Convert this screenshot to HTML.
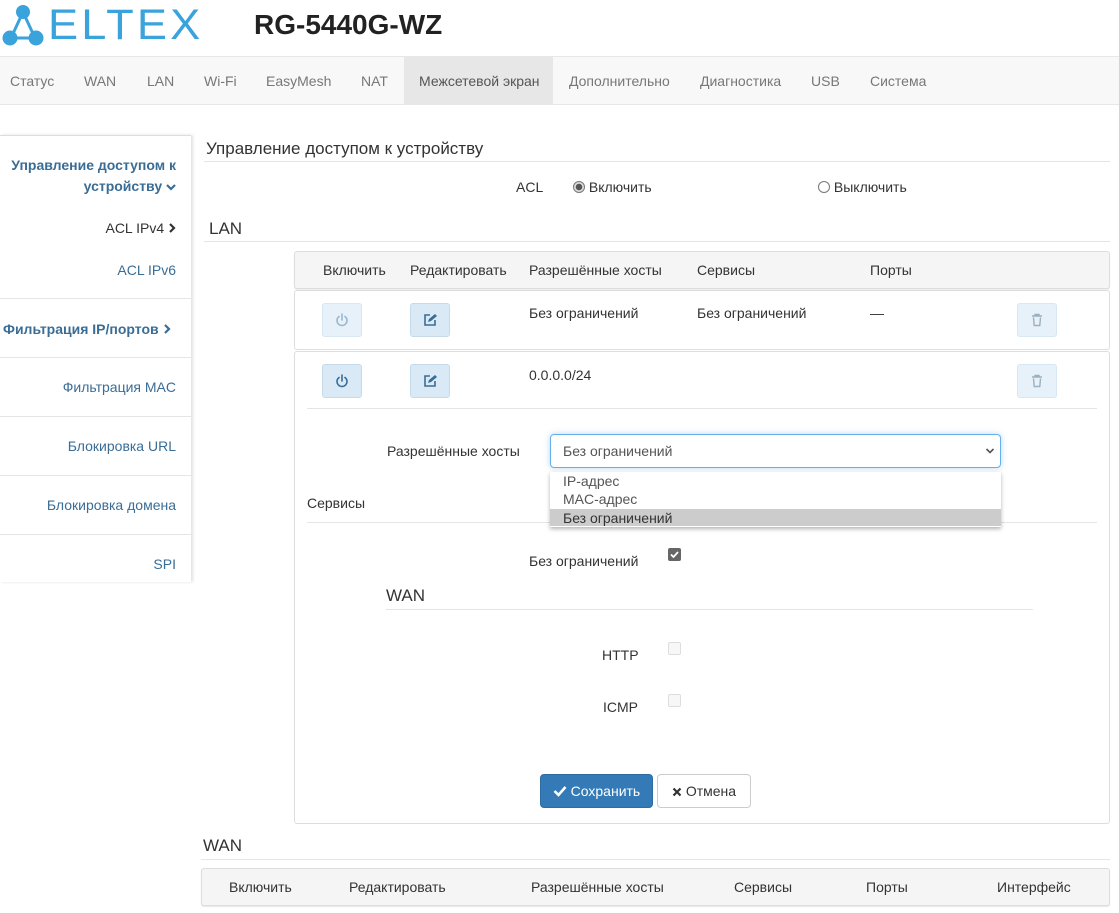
<!DOCTYPE html>
<html><head><meta charset="utf-8">
<style>
*{box-sizing:border-box;margin:0;padding:0}
body{width:1119px;height:913px;overflow:hidden;background:#fff;font-family:"Liberation Sans",Arial,sans-serif;font-size:14px;color:#333;position:relative}
.a{position:absolute;white-space:nowrap;line-height:16px}
.nav{position:absolute;top:56px;left:0;width:1119px;height:49px;background:#f8f8f8;border-top:1px solid #e7e7e7;border-bottom:1px solid #e7e7e7}
.nav span{position:absolute;top:16px;color:#777;font-size:14px}
.side{position:absolute;left:0;top:135px;width:191px;height:447px;background:#fff;box-shadow:2px 0 3px rgba(0,0,0,.12);border-top:1px solid #ddd}
.side .it{position:absolute;right:15px;color:#3a6d96;font-size:14px;text-align:right;line-height:21px}
.hr{position:absolute;height:1px;background:#e5e5e5}
.btn{position:absolute;width:40px;height:34px;border:1px solid #c5dbec;border-radius:3px;background:#d9eaf6}
.btn.l{background:#e6f1f9;border-color:#d8e7f2}
.btn svg{position:absolute;left:12px;top:9px}
.box{position:absolute;border:1px solid #ddd;border-radius:3px;background:#fff}
</style></head><body>
<svg class="a" style="left:2px;top:4px" width="42" height="42" viewBox="0 0 42 42">
<g stroke="#3aa3dc" stroke-width="3" fill="none"><line x1="21" y1="8" x2="9" y2="34"/><line x1="21" y1="8" x2="33" y2="34"/><line x1="9" y1="34" x2="33" y2="34"/></g>
<circle cx="21" cy="8" r="7" fill="#3aa3dc"/><circle cx="8" cy="34" r="7.5" fill="#3aa3dc"/><circle cx="34" cy="34" r="7.5" fill="#3aa3dc"/>
</svg>
<div class="a" style="left:48px;top:4px;font-size:43px;line-height:42px;color:#3aa3dc;letter-spacing:3px;transform:scaleX(1.05);transform-origin:left">ELTEX</div>
<div class="a" style="left:254px;top:10px;font-size:28px;line-height:30px;font-weight:bold;color:#222">RG-5440G-WZ</div>
<div class="nav">
<div style="position:absolute;left:404px;top:0;width:149px;height:47px;background:#e7e7e7"></div>
<span style="left:10px">Статус</span><span style="left:84px">WAN</span><span style="left:147px">LAN</span><span style="left:204px">Wi-Fi</span><span style="left:266px">EasyMesh</span><span style="left:361px">NAT</span><span style="left:419px;color:#555">Межсетевой экран</span><span style="left:569px">Дополнительно</span><span style="left:700px">Диагностика</span><span style="left:811px">USB</span><span style="left:870px">Система</span>
</div>
<div class="side">
<div class="it" style="top:19px;font-weight:bold">Управление доступом к<br>устройству <svg width="10" height="8" viewBox="0 0 10 8"><path d="M1 2l4 4 4-4" stroke="#3a6d96" stroke-width="2.2" fill="none"/></svg></div>
<div class="it" style="top:82px;color:#333">ACL IPv4 <svg width="8" height="10" viewBox="0 0 8 10"><path d="M2 1l4 4-4 4" stroke="#333" stroke-width="2.2" fill="none"/></svg></div>
<div class="it" style="top:124px">ACL IPv6</div>
<div class="hr" style="top:162px;left:0;width:191px"></div>
<div class="it" style="top:183px;font-weight:bold;right:auto;left:3px">Фильтрация IP/портов <svg width="8" height="10" viewBox="0 0 8 10"><path d="M2 1l4 4-4 4" stroke="#3a6d96" stroke-width="2.2" fill="none"/></svg></div>
<div class="hr" style="top:221px;left:0;width:191px"></div>
<div class="it" style="top:241px">Фильтрация MAC</div>
<div class="hr" style="top:280px;left:0;width:191px"></div>
<div class="it" style="top:300px">Блокировка URL</div>
<div class="hr" style="top:339px;left:0;width:191px"></div>
<div class="it" style="top:359px">Блокировка домена</div>
<div class="hr" style="top:398px;left:0;width:191px"></div>
<div class="it" style="top:418px">SPI</div>
</div>
<div class="a" style="left:206px;top:139px;font-size:17px;line-height:20px">Управление доступом к устройству</div>
<div class="hr" style="left:204px;top:161px;width:906px"></div>
<div class="a" style="left:516px;top:179px">ACL</div>
<div class="a" style="left:573px;top:179px"><span style="display:inline-block;width:12px;height:12px;border:1px solid #777;border-radius:50%;vertical-align:-1px;background:radial-gradient(#555 3px,#ddd 3.5px)"></span> Включить</div>
<div class="a" style="left:818px;top:179px"><span style="display:inline-block;width:12px;height:12px;border:1px solid #777;border-radius:50%;vertical-align:-1px"></span> Выключить</div>
<div class="a" style="left:209px;top:219px;font-size:17px;line-height:20px">LAN</div>
<div class="hr" style="left:204px;top:241px;width:906px"></div>
<div class="box" style="left:294px;top:251px;width:816px;height:38px;background:#f5f5f5;box-shadow:0 1px 1px rgba(0,0,0,.08)"></div>
<div class="a" style="left:323px;top:262px">Включить</div><div class="a" style="left:410px;top:262px">Редактировать</div><div class="a" style="left:529px;top:262px">Разрешённые хосты</div><div class="a" style="left:697px;top:262px">Сервисы</div><div class="a" style="left:870px;top:262px">Порты</div>
<div class="box" style="left:294px;top:290px;width:816px;height:60px"></div>
<div class="btn l" style="left:322px;top:303px"><svg width="14" height="14" viewBox="0 0 14 14"><path d="M4 3.5A5 5 0 1 0 10 3.5M7 1v6" stroke="#9bb8cc" stroke-width="1.6" fill="none" stroke-linecap="round"/></svg></div>
<div class="btn" style="left:410px;top:303px"><svg width="14" height="14" viewBox="0 0 14 14"><path d="M7 2H2v10h10V7" stroke="#3a6d96" stroke-width="1.6" fill="none"/><path d="M5 9l1-3 6-5 2 2-6 5z" fill="#3a6d96"/></svg></div>
<div class="a" style="left:529px;top:305px">Без ограничений</div><div class="a" style="left:697px;top:305px">Без ограничений</div><div class="a" style="left:870px;top:305px">—</div>
<div class="btn l" style="left:1017px;top:303px"><svg width="14" height="14" viewBox="0 0 14 14"><path d="M2 3h10M5 3V1.5h4V3M3.5 4.5l.7 8h5.6l.7-8" stroke="#9bb0c0" stroke-width="1.4" fill="none"/></svg></div>
<div class="box" style="left:294px;top:351px;width:816px;height:473px"></div>
<div class="btn" style="left:322px;top:364px"><svg width="14" height="14" viewBox="0 0 14 14"><path d="M4 3.5A5 5 0 1 0 10 3.5M7 1v6" stroke="#3a6d96" stroke-width="1.6" fill="none" stroke-linecap="round"/></svg></div>
<div class="btn" style="left:410px;top:364px"><svg width="14" height="14" viewBox="0 0 14 14"><path d="M7 2H2v10h10V7" stroke="#3a6d96" stroke-width="1.6" fill="none"/><path d="M5 9l1-3 6-5 2 2-6 5z" fill="#3a6d96"/></svg></div>
<div class="a" style="left:529px;top:367px">0.0.0.0/24</div>
<div class="btn l" style="left:1017px;top:364px"><svg width="14" height="14" viewBox="0 0 14 14"><path d="M2 3h10M5 3V1.5h4V3M3.5 4.5l.7 8h5.6l.7-8" stroke="#9bb0c0" stroke-width="1.4" fill="none"/></svg></div>
<div class="hr" style="left:307px;top:408px;width:790px"></div>
<div class="a" style="left:387px;top:443px">Разрешённые хосты</div>
<div style="position:absolute;left:550px;top:434px;width:451px;height:34px;border:1px solid #66afe9;border-radius:4px;box-shadow:0 0 6px rgba(102,175,233,.5)"></div>
<div class="a" style="left:563px;top:443px;color:#555">Без ограничений</div>
<svg class="a" style="left:985px;top:447px" width="10" height="8" viewBox="0 0 10 8"><path d="M1.5 2l3.5 3.5 3.5-3.5" stroke="#555" stroke-width="1.6" fill="none"/></svg>
<div class="a" style="left:307px;top:495px">Сервисы</div>
<div class="hr" style="left:307px;top:522px;width:790px"></div>
<div style="position:absolute;left:550px;top:472px;width:451px;height:55px;background:#fff;box-shadow:0 2px 4px rgba(0,0,0,.3)">
<div class="a" style="left:13px;top:1px;color:#555">IP-адрес</div><div class="a" style="left:13px;top:19px;color:#555">MAC-адрес</div>
<div style="position:absolute;left:0;top:37px;width:451px;height:17px;background:#ccc"></div><div class="a" style="left:13px;top:38px">Без ограничений</div>
</div>
<div class="a" style="left:529px;top:553px">Без ограничений</div>
<svg class="a" style="left:668px;top:548px" width="13" height="13" viewBox="0 0 13 13"><rect width="13" height="13" rx="2" fill="#666"/><path d="M3 6.5l2.5 2.5 4.5-5" stroke="#fff" stroke-width="1.8" fill="none"/></svg>
<div class="a" style="left:386px;top:586px;font-size:17px;line-height:20px">WAN</div>
<div class="hr" style="left:386px;top:609px;width:647px"></div>
<div class="a" style="left:602px;top:647px">HTTP</div><div style="position:absolute;left:668px;top:642px;width:13px;height:13px;border:1px solid #ddd;border-radius:2px;background:#f7f7f7"></div>
<div class="a" style="left:603px;top:699px">ICMP</div><div style="position:absolute;left:668px;top:694px;width:13px;height:13px;border:1px solid #ddd;border-radius:2px;background:#f7f7f7"></div>
<div style="position:absolute;left:540px;top:774px;width:113px;height:34px;background:#337ab7;border:1px solid #2e6da4;border-radius:4px;color:#fff;line-height:32px;text-align:center"><svg width="14" height="12" viewBox="0 0 14 12" style="vertical-align:-1px"><path d="M1.5 6l4 4 7-8" stroke="#fff" stroke-width="2.6" fill="none"/></svg> Сохранить</div>
<div style="position:absolute;left:657px;top:774px;width:94px;height:34px;background:#fff;border:1px solid #ccc;border-radius:4px;line-height:32px;text-align:center"><svg width="10" height="10" viewBox="0 0 10 10" style="vertical-align:-1px"><path d="M1.5 1.5l7 7M8.5 1.5l-7 7" stroke="#333" stroke-width="2.2"/></svg> Отмена</div>
<div class="a" style="left:203px;top:836px;font-size:17px;line-height:20px">WAN</div>
<div class="hr" style="left:201px;top:859px;width:909px"></div>
<div class="box" style="left:201px;top:868px;width:909px;height:38px;background:#f5f5f5;box-shadow:0 1px 1px rgba(0,0,0,.1)"></div>
<div class="a" style="left:229px;top:879px">Включить</div><div class="a" style="left:349px;top:879px">Редактировать</div><div class="a" style="left:531px;top:879px">Разрешённые хосты</div><div class="a" style="left:734px;top:879px">Сервисы</div><div class="a" style="left:866px;top:879px">Порты</div><div class="a" style="left:997px;top:879px">Интерфейс</div>
</body></html>
